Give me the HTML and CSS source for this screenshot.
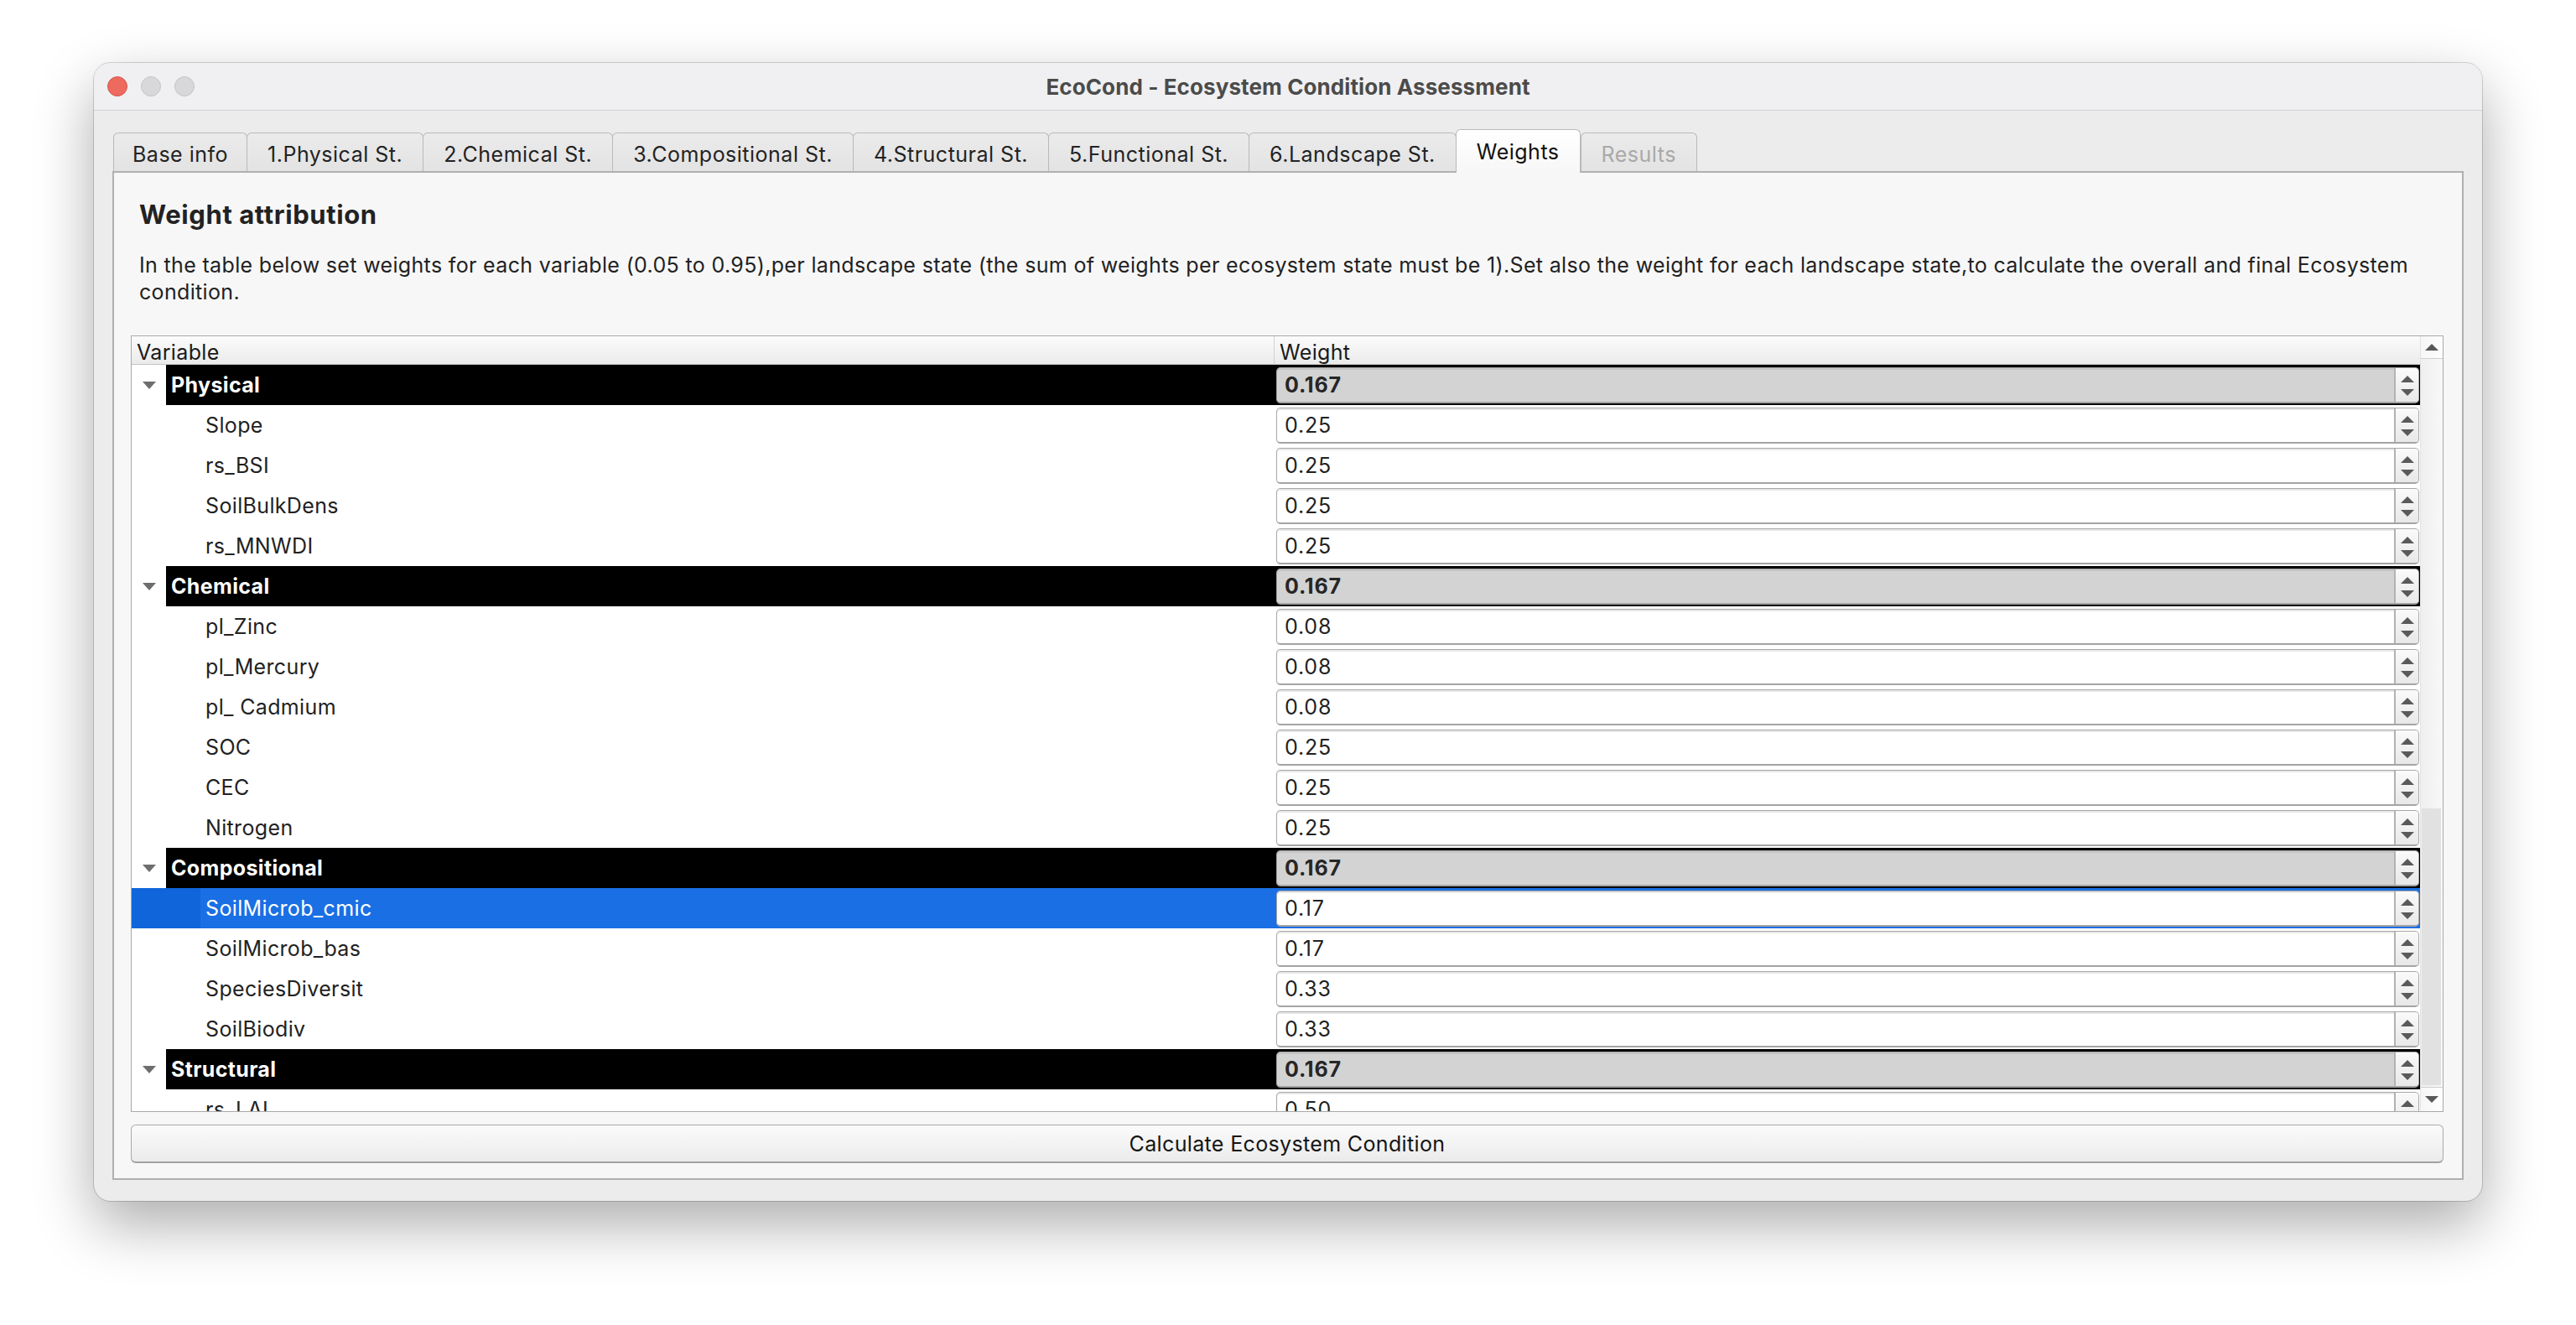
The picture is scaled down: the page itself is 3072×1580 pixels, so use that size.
FILE: index.html
```html
<!DOCTYPE html>
<html>
<head>
<meta charset="utf-8">
<title>EcoCond - Ecosystem Condition Assessment</title>
<link rel="stylesheet" href="styles.css">
</head>
<body>
<div class="stage">
  <div class="window">
    <div class="titlebar">
      <div class="lights"><span class="light red"></span><span class="light"></span><span class="light"></span></div>
      <div class="title">EcoCond - Ecosystem Condition Assessment</div>
      <div></div>
    </div>
    <div class="wbody">
      <div class="tabs">
        <div class="tab tab-first">Base info</div>
        <div class="tab">1.Physical St.</div>
        <div class="tab">2.Chemical St.</div>
        <div class="tab">3.Compositional St.</div>
        <div class="tab">4.Structural St.</div>
        <div class="tab">5.Functional St.</div>
        <div class="tab">6.Landscape St.</div>
        <div class="tab active">Weights</div>
        <div class="tab disabled">Results</div>
      </div>
      <div class="pane">
        <h1 class="heading">Weight attribution</h1>
        <p class="desc"><span class="line">In the table below set weights for each variable (0.05 to 0.95),per landscape state (the sum of weights per ecosystem state must be 1).Set also the weight for each landscape state,to calculate the overall and final Ecosystem</span><span class="line">condition.</span></p>
        <div class="tree">
          <div class="viewport">
            <div class="thead">
              <div class="th th-var">Variable</div>
              <div class="th th-w">Weight</div>
            </div>
            <div class="rows">
              <div class="row group">
                <div class="cell-var"><span class="twisty"><i></i></span><span class="gname">Physical</span></div>
                <div class="cell-w"><div class="spin"><span class="val">0.167</span><span class="btns"><i class="up"></i><i class="down"></i></span></div></div>
              </div>
              <div class="row">
                <div class="cell-var"><span class="vname">Slope</span></div>
                <div class="cell-w"><div class="spin"><span class="val">0.25</span><span class="btns"><i class="up"></i><i class="down"></i></span></div></div>
              </div>
              <div class="row">
                <div class="cell-var"><span class="vname">rs_BSI</span></div>
                <div class="cell-w"><div class="spin"><span class="val">0.25</span><span class="btns"><i class="up"></i><i class="down"></i></span></div></div>
              </div>
              <div class="row">
                <div class="cell-var"><span class="vname">SoilBulkDens</span></div>
                <div class="cell-w"><div class="spin"><span class="val">0.25</span><span class="btns"><i class="up"></i><i class="down"></i></span></div></div>
              </div>
              <div class="row">
                <div class="cell-var"><span class="vname">rs_MNWDI</span></div>
                <div class="cell-w"><div class="spin"><span class="val">0.25</span><span class="btns"><i class="up"></i><i class="down"></i></span></div></div>
              </div>
              <div class="row group">
                <div class="cell-var"><span class="twisty"><i></i></span><span class="gname">Chemical</span></div>
                <div class="cell-w"><div class="spin"><span class="val">0.167</span><span class="btns"><i class="up"></i><i class="down"></i></span></div></div>
              </div>
              <div class="row">
                <div class="cell-var"><span class="vname">pl_Zinc</span></div>
                <div class="cell-w"><div class="spin"><span class="val">0.08</span><span class="btns"><i class="up"></i><i class="down"></i></span></div></div>
              </div>
              <div class="row">
                <div class="cell-var"><span class="vname">pl_Mercury</span></div>
                <div class="cell-w"><div class="spin"><span class="val">0.08</span><span class="btns"><i class="up"></i><i class="down"></i></span></div></div>
              </div>
              <div class="row">
                <div class="cell-var"><span class="vname">pl_ Cadmium</span></div>
                <div class="cell-w"><div class="spin"><span class="val">0.08</span><span class="btns"><i class="up"></i><i class="down"></i></span></div></div>
              </div>
              <div class="row">
                <div class="cell-var"><span class="vname">SOC</span></div>
                <div class="cell-w"><div class="spin"><span class="val">0.25</span><span class="btns"><i class="up"></i><i class="down"></i></span></div></div>
              </div>
              <div class="row">
                <div class="cell-var"><span class="vname">CEC</span></div>
                <div class="cell-w"><div class="spin"><span class="val">0.25</span><span class="btns"><i class="up"></i><i class="down"></i></span></div></div>
              </div>
              <div class="row">
                <div class="cell-var"><span class="vname">Nitrogen</span></div>
                <div class="cell-w"><div class="spin"><span class="val">0.25</span><span class="btns"><i class="up"></i><i class="down"></i></span></div></div>
              </div>
              <div class="row group">
                <div class="cell-var"><span class="twisty"><i></i></span><span class="gname">Compositional</span></div>
                <div class="cell-w"><div class="spin"><span class="val">0.167</span><span class="btns"><i class="up"></i><i class="down"></i></span></div></div>
              </div>
              <div class="row selected">
                <div class="cell-var"><span class="vname">SoilMicrob_cmic</span></div>
                <div class="cell-w"><div class="spin"><span class="val">0.17</span><span class="btns"><i class="up"></i><i class="down"></i></span></div></div>
              </div>
              <div class="row">
                <div class="cell-var"><span class="vname">SoilMicrob_bas</span></div>
                <div class="cell-w"><div class="spin"><span class="val">0.17</span><span class="btns"><i class="up"></i><i class="down"></i></span></div></div>
              </div>
              <div class="row">
                <div class="cell-var"><span class="vname">SpeciesDiversit</span></div>
                <div class="cell-w"><div class="spin"><span class="val">0.33</span><span class="btns"><i class="up"></i><i class="down"></i></span></div></div>
              </div>
              <div class="row">
                <div class="cell-var"><span class="vname">SoilBiodiv</span></div>
                <div class="cell-w"><div class="spin"><span class="val">0.33</span><span class="btns"><i class="up"></i><i class="down"></i></span></div></div>
              </div>
              <div class="row group">
                <div class="cell-var"><span class="twisty"><i></i></span><span class="gname">Structural</span></div>
                <div class="cell-w"><div class="spin"><span class="val">0.167</span><span class="btns"><i class="up"></i><i class="down"></i></span></div></div>
              </div>
              <div class="row">
                <div class="cell-var"><span class="vname">rs_LAI</span></div>
                <div class="cell-w"><div class="spin"><span class="val">0.50</span><span class="btns"><i class="up"></i><i class="down"></i></span></div></div>
              </div>
            </div>
          </div>
          <div class="vscroll">
            <div class="sb-btn sb-up"><i></i></div>
            <div class="sb-track"><div class="sb-space"></div><div class="sb-thumb"></div></div>
            <div class="sb-btn sb-down"><i></i></div>
          </div>
        </div>
        <button class="calc">Calculate Ecosystem Condition</button>
      </div>
    </div>
  </div>
</div>
</body>
</html>
```

FILE: styles.css
```css
* { box-sizing: border-box; }
html, body { margin: 0; padding: 0; }
body {
  background: #ffffff;
  font-family: "Inter", "Noto Sans", "Liberation Sans", sans-serif;
  color: #222;
  width: 3072px;
  height: 1580px;
  overflow: hidden;
}
.stage {
  padding: 75px 0 0 112px;
}
.window {
  width: 2848px;
  height: 1357px;
  border-radius: 20px;
  overflow: hidden;
  background: #ececec;
  box-shadow: 0 0 0 1px rgba(0,0,0,0.16), 0 28px 70px rgba(0,0,0,0.33);
  display: flex;
  flex-direction: column;
}
.titlebar {
  height: 57px;
  flex: none;
  background: #f0f0f2;
  border-bottom: 1px solid #d2d2d2;
  display: grid;
  grid-template-columns: 1fr auto 1fr;
  align-items: center;
}
.lights {
  display: flex;
  gap: 16px;
  padding-left: 16px;
}
.light {
  width: 24px;
  height: 24px;
  border-radius: 50%;
  background: #d8d8da;
  border: 1px solid #c4c4c6;
}
.light.red {
  background: #ee6a5f;
  border-color: #d55749;
}
.title {
  font-size: 26px;
  font-weight: 700;
  color: #4b4b4b;
  letter-spacing: 0.1px;
}
.wbody {
  flex: 1;
  display: flex;
  flex-direction: column;
  padding: 22px 22px 25px 22px;
}
.tabs {
  height: 50px;
  flex: none;
  display: flex;
  align-items: flex-end;
  padding-left: 1px;
  position: relative;
  z-index: 1;
}
.tab {
  height: 46px;
  padding: 0 24px;
  display: flex;
  align-items: center;
  padding-top: 4px;
  font-size: 25px;
  letter-spacing: 0.5px;
  color: #232323;
  background: linear-gradient(#ebebeb, #e3e3e3);
  border: 1px solid #b9b9b9;
  border-bottom: none;
  border-radius: 6px 6px 0 0;
  margin-right: -1px;
}
.tab-first {
  padding: 0 22px;
  padding-top: 4px;
}
.tab.active {
  height: 52px;
  margin-bottom: -2px;
  padding-top: 0;
  background: linear-gradient(#ffffff, #f7f7f7);
  color: #111;
  position: relative;
  z-index: 2;
  margin-right: 0;
}
.tab.disabled {
  color: #a9a9a9;
}
.pane {
  flex: 1;
  background: #f7f7f7;
  border: 2px solid #b0b0b0;
  padding: 32px 22px 18px 20px;
  display: flex;
  flex-direction: column;
}
.heading {
  margin: 0 0 0 10px;
  font-size: 31px;
  line-height: 36px;
  letter-spacing: 0.6px;
  font-weight: 700;
  color: #222;
}
.desc {
  margin: 26px 0 0 10px;
  font-size: 25px;
  line-height: 32px;
  letter-spacing: 0.34px;
  color: #222;
}
.desc .line {
  display: block;
  white-space: nowrap;
}
.tree {
  margin-top: 36px;
  height: 926px;
  flex: none;
  border: 1px solid #a9a9a9;
  background: #ffffff;
  display: flex;
}
.viewport {
  flex: 1;
  overflow: hidden;
  display: flex;
  flex-direction: column;
}
.thead {
  height: 34px;
  flex: none;
  display: grid;
  grid-template-columns: 1363px 1fr;
  background: linear-gradient(#fbfbfb, #ebebeb);
  border-bottom: 1px solid #c4c4c4;
}
.th {
  font-size: 25px;
  letter-spacing: 0.35px;
  line-height: 24px;
  display: flex;
  align-items: flex-end;
  padding: 0 0 2px 6px;
  color: #1a1a1a;
}
.th-var {
  border-right: 1px solid #d2d2d2;
}
.rows {
  display: flex;
  flex-direction: column;
}
.row {
  height: 48px;
  flex: none;
  display: grid;
  grid-template-columns: 1363px 1fr;
}
.cell-var {
  display: flex;
  align-items: stretch;
  padding-left: 82px;
}
.vname {
  flex: 1;
  display: flex;
  align-items: center;
  padding-left: 6px;
  font-size: 25px;
  letter-spacing: 0.35px;
  color: #222;
}
.group .cell-var {
  padding-left: 0;
}
.twisty {
  width: 41px;
  flex: none;
  display: flex;
  align-items: center;
  justify-content: center;
  background: #fff;
}
.twisty i {
  width: 0;
  height: 0;
  border-left: 8px solid transparent;
  border-right: 8px solid transparent;
  border-top: 9px solid #6e6e6e;
}
.gname {
  flex: 1;
  background: #000;
  color: #fff;
  font-weight: 700;
  font-size: 25px;
  letter-spacing: 0.35px;
  display: flex;
  align-items: center;
  padding-left: 6px;
}
.selected .cell-var {
  background: #0f65d9;
}
.selected .vname {
  background: #1a6fe4;
  color: #fff;
  border-radius: 2px;
}
.cell-w {
  padding: 3px 1px 2px 2px;
}
.group .cell-w {
  background: #000;
}
.selected .cell-w {
  background: #1a6fe4;
}
.spin {
  height: 43px;
  display: flex;
  background: #ffffff;
  border: 1px solid #a8a8a8;
  border-bottom: 2px solid #a4a4a4;
  border-radius: 5px;
  box-shadow: inset 0 2px 0 #e8e8e8;
  overflow: hidden;
}
.group .spin {
  background: #d3d3d3;
  box-shadow: inset 0 2px 0 #c4c4c4;
}
.val {
  flex: 1;
  display: flex;
  align-items: center;
  padding-left: 9px;
  font-size: 25px;
  color: #222;
  letter-spacing: 0.8px;
}
.group .val {
  font-weight: 700;
  color: #262626;
}
.btns {
  width: 29px;
  flex: none;
  border-left: 2px solid #b2b2b2;
  background: linear-gradient(#fafafa, #e8e8e8);
  display: flex;
  flex-direction: column;
  align-items: center;
  justify-content: center;
  gap: 8px;
  padding-top: 2px;
}
.btns .up {
  width: 0;
  height: 0;
  border-left: 8px solid transparent;
  border-right: 8px solid transparent;
  border-bottom: 8px solid #5a5a5a;
}
.btns .down {
  width: 0;
  height: 0;
  border-left: 8px solid transparent;
  border-right: 8px solid transparent;
  border-top: 8px solid #5a5a5a;
}
.vscroll {
  width: 27px;
  flex: none;
  display: flex;
  flex-direction: column;
  background: linear-gradient(90deg, #efefef, #f8f8f8);
  border-left: 1px solid #e2e2e2;
}
.sb-btn {
  height: 27px;
  flex: none;
  display: flex;
  align-items: center;
  justify-content: center;
  background: linear-gradient(90deg, #f6f6f6, #fdfdfd);
}
.sb-up {
  border-bottom: 1px solid #cfcfcf;
}
.sb-down {
  border-top: 1px solid #cfcfcf;
  height: 29px;
}
.sb-up i {
  width: 0;
  height: 0;
  border-left: 8px solid transparent;
  border-right: 8px solid transparent;
  border-bottom: 8px solid #585858;
}
.sb-down i {
  width: 0;
  height: 0;
  border-left: 8px solid transparent;
  border-right: 8px solid transparent;
  border-top: 8px solid #585858;
}
.sb-track {
  flex: 1;
  display: flex;
  flex-direction: column;
}
.sb-space {
  height: 536px;
  flex: none;
}
.sb-thumb {
  flex: 1;
  margin: 0 2px 2px 1px;
  background: #e1e1e1;
}
.calc {
  margin-top: 15px;
  height: 46px;
  flex: none;
  width: 100%;
  font-family: "Inter", "Noto Sans", "Liberation Sans", sans-serif;
  font-size: 25px;
  letter-spacing: 0.35px;
  color: #151515;
  background: linear-gradient(#fbfbfb, #ebebeb);
  border: 1px solid #a9a9a9;
  border-bottom: 2px solid #a2a2a2;
  border-radius: 6px;
  padding: 0;
}
```
